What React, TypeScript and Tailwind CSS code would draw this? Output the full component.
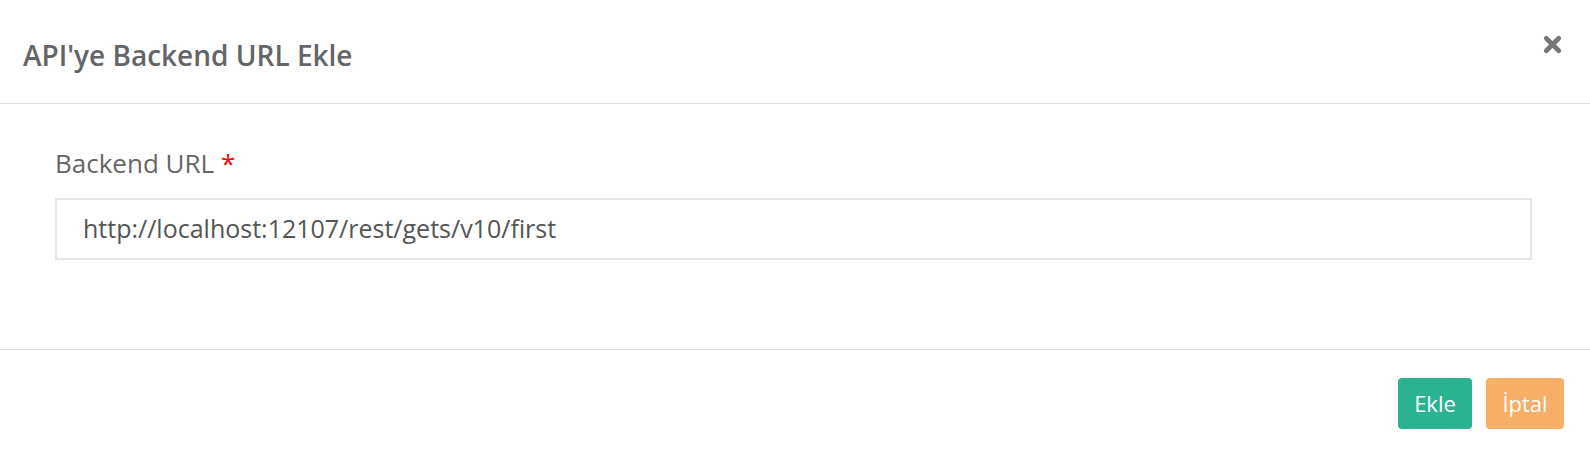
import { X } from 'lucide-react';

export default function App() {
  return (
    <div className="w-[1590px] h-[452px] bg-white text-[#666] [font-family:'Open_Sans',sans-serif] flex flex-col">
      <div className="h-[104px] border-b border-[#dcdfe3] flex items-center justify-between pl-[23px] pr-[25px]">
        <h4 className="text-[28px] leading-[36px] font-semibold text-[#636569] mt-[6px]">API'ye Backend URL Ekle</h4>
        <button className="text-[#777] -mt-[14px]">
          <X size={25} strokeWidth={4.5} />
        </button>
      </div>

      <div className="h-[246px] border-b border-[#dcdfe3] px-[55px] pt-[42px]">
        <label className="block text-[26px] leading-[34px] text-[#666]">
          Backend URL <span className="text-[#ff0000]">*</span>
        </label>
        <div className="mt-[18px] h-[62px] border-2 border-[#e6e6e6] w-[1477px] flex items-center pl-[26px]">
          <span className="text-[25px] text-[#555]">http://localhost:12107/rest/gets/v10/first</span>
        </div>
      </div>

      <div className="flex-1 flex justify-end items-start gap-[14px] pr-[26px] pt-[28px]">
        <button className="h-[51px] w-[74px] rounded-[4px] bg-[#2bb391] text-white text-[22px]">Ekle</button>
        <button className="h-[51px] w-[78px] rounded-[4px] bg-[#f7ae66] text-white text-[22px]">İptal</button>
      </div>
    </div>
  );
}
